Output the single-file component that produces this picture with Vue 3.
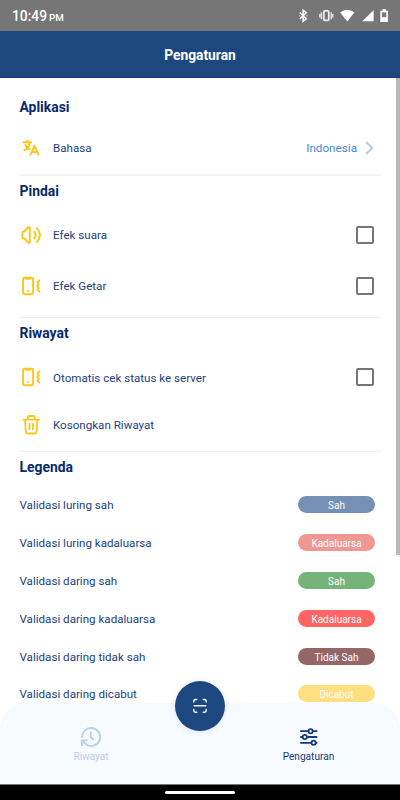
<script setup>
import { ref } from 'vue'

const sound = ref(false)
const vibrate = ref(false)
const autoCheck = ref(false)

const legends = [
  { label: 'Validasi luring sah', badge: 'Sah', tone: 'blue' },
  { label: 'Validasi luring kadaluarsa', badge: 'Kadaluarsa', tone: 'pink' },
  { label: 'Validasi daring sah', badge: 'Sah', tone: 'green' },
  { label: 'Validasi daring kadaluarsa', badge: 'Kadaluarsa', tone: 'red' },
  { label: 'Validasi daring tidak sah', badge: 'Tidak Sah', tone: 'brown' },
  { label: 'Validasi daring dicabut', badge: 'Dicabut', tone: 'yellow' },
]
</script>

<template>
  <div class="screen">
    <div class="status">
      <div class="clock">10:49<span class="pm">PM</span></div>
      <svg class="status-icons" width="92" height="16" viewBox="0 0 92 16">
        <path d="M.8 4.5 7.3 11 4.1 13.2V2.2L7.3 4.6.8 11" fill="none" stroke="#fff" stroke-width="1.5" />
        <path d="M.1 7.8h.1M7.9 7.8h.1" stroke="#fff" stroke-width="1.2" stroke-linecap="round" />
        <rect x="24.8" y="2.9" width="5" height="9.4" rx="1" fill="none" stroke="#eee" stroke-width="1.7" />
        <path d="M22.4 4.2v7M32.2 4.2v7M20.8 6v3.6M33.8 6v3.6" stroke="#ddd" stroke-width="1.5" />
        <path d="M41.2 4.6Q48.3-1 55.4 4.6L48.3 13.5Z" fill="#fff" />
        <path d="M74.7 2.2v11H63.2Z" fill="#fff" />
        <path d="M83.5 1.2h3.5v1.6h1.9v11.2h-7.6V2.8h2.2Z" fill="#fff" />
        <path d="M82.9 4.4h4.4v4.8h-4.4Z" fill="#777" />
      </svg>
    </div>
    <header class="header">Pengaturan</header>

    <main class="content">
      <section class="group app-group">
        <h2>Aplikasi</h2>
        <div class="row">
          <svg class="icon" viewBox="0 0 24 24">
            <g fill="none" stroke="#ffc516" stroke-width="1.9" stroke-linecap="round" stroke-linejoin="round">
              <path d="M4.4 6.2h7.6M8.5 4.4v1.8M6.3 9c1.2 2.5 3 3.9 4.6 4.3M10.6 6.4c-.3 3.8-2.4 6.9-5.4 7.7" />
              <path d="m11.4 18.8 4.1-9 4.1 9M13 16h5.1" />
            </g>
          </svg>
          <span class="label">Bahasa</span>
          <span class="value">Indonesia</span>
          <svg class="chevron" width="9" height="14" viewBox="0 0 9 14">
            <path d="m1 1 6.3 6L1 13" fill="none" stroke="#b5cbe8" stroke-width="1.9" />
          </svg>
        </div>
      </section>

      <section class="group scan-group">
        <h2>Pindai</h2>
        <div class="row">
          <svg class="icon" viewBox="0 0 24 24">
            <g fill="none" stroke="#ffc516" stroke-width="1.9" stroke-linecap="round" stroke-linejoin="round">
              <path d="M5.4 8.5h-.9q-1.2 0-1.2 1.7v3.6q0 1.7 1.2 1.7h.9l3.8 4q1.6 1.3 1.6-.8V5.3q0-2.1-1.6-.8Z" />
              <path d="M15.2 8.5q3 3.5 0 7M17.9 5q6.1 7 0 14" />
            </g>
          </svg>
          <span class="label">Efek suara</span>
          <input v-model="sound" class="check" type="checkbox" aria-label="Efek suara" />
        </div>
        <div class="row">
          <svg class="icon" viewBox="0 0 24 24">
            <g fill="none" stroke="#ffc516" stroke-width="1.9" stroke-linecap="round" stroke-linejoin="round">
              <rect x="4.1" y="3.8" width="10" height="16.4" rx="1.2" />
              <path d="M7.3 4.8h3.6M9.1 17h.1M20.4 6.5l-1.9 1.7 1.2 2.1-1.5 1.7 1.5 1.8-1.2 2.1 1.9 1.7" />
            </g>
          </svg>
          <span class="label">Efek Getar</span>
          <input v-model="vibrate" class="check" type="checkbox" aria-label="Efek Getar" />
        </div>
      </section>

      <section class="group history-group">
        <h2>Riwayat</h2>
        <div class="row">
          <svg class="icon" viewBox="0 0 24 24">
            <g fill="none" stroke="#ffc516" stroke-width="1.9" stroke-linecap="round" stroke-linejoin="round">
              <rect x="4.1" y="3.8" width="10" height="16.4" rx="1.2" />
              <path d="M7.3 4.8h3.6M9.1 17h.1M20.4 6.5l-1.9 1.7 1.2 2.1-1.5 1.7 1.5 1.8-1.2 2.1 1.9 1.7" />
            </g>
          </svg>
          <span class="label">Otomatis cek status ke server</span>
          <input v-model="autoCheck" class="check" type="checkbox" aria-label="Otomatis cek status ke server" />
        </div>
        <div class="row">
          <svg class="icon" viewBox="0 0 24 24">
            <g fill="none" stroke="#ffc516" stroke-width="1.8" stroke-linecap="round" stroke-linejoin="round">
              <path d="M4.4 6.7h15.8M6 6.9l.8 11.6q.2 2 2 2h6.8q1.8 0 2-2l.8-11.6M8.8 6.5V4.2q0-1.2 1.2-1.2h4.4q1.2 0 1.2 1.2v2.3M10.5 11v5.3M14 11v5.3" />
            </g>
          </svg>
          <span class="label raised">Kosongkan Riwayat</span>
        </div>
      </section>

      <section class="legend">
        <h2>Legenda</h2>
        <div v-for="item in legends" :key="item.label" class="legend-row">
          <span class="label">{{ item.label }}</span>
          <span class="badge" :class="item.tone">{{ item.badge }}</span>
        </div>
      </section>
      <div class="scrollbar"></div>
    </main>

    <nav class="tabs">
      <a class="tab muted">
        <svg width="22" height="22" viewBox="0 0 22 22">
          <g fill="none" stroke="currentColor" stroke-width="1.9">
            <path d="M2.2 12A9 9 0 1 1 6.5 18.7" />
            <path d="M1.9 20v-5.6h5.8M2.2 14.7l4.6 4" />
            <path d="M10.8 5.8V11l3 3" />
          </g>
        </svg>
        <span>Riwayat</span>
      </a>
      <a class="tab">
        <svg width="22" height="22" viewBox="0 0 22 22">
          <g fill="none" stroke="currentColor" stroke-width="1.8">
            <path d="M2.2 5.2h7.8M14.8 5.2h4.5M2.2 11h2.6M9.2 11h10.1M2.2 16.8h11M18 16.8h1.3" />
            <circle cx="12.6" cy="5.2" r="2.1" />
            <circle cx="6.8" cy="11" r="2.1" />
            <circle cx="15.6" cy="16.8" r="2.1" />
          </g>
        </svg>
        <span>Pengaturan</span>
      </a>
      <button class="fab" aria-label="Pindai">
        <svg width="16" height="16" viewBox="0 0 16 16">
          <path d="M1.8 4V3q0-1.6 1.6-1.6h1.4M11.2 1.4h1.4q1.6 0 1.6 1.6v1M14.2 11.6v1q0 1.6-1.6 1.6h-1.4M4.8 14.2H3.4q-1.6 0-1.6-1.6v-1M2.3 7.8h11.4" fill="none" stroke="#f2f6fb" stroke-width="1.5" stroke-linecap="round" />
        </svg>
      </button>
    </nav>
    <div class="gesture"><span class="pill"></span></div>
  </div>
</template>

<style>
body {
  margin: 0;
  background: #fff;
}
</style>

<style scoped>
.screen {
  display: flex;
  flex-direction: column;
  width: 400px;
  height: 800px;
  overflow: hidden;
  background: #fff;
  color: #1b4280;
  font-family: Roboto, 'Liberation Sans', sans-serif;
}
.status {
  display: flex;
  flex: none;
  align-items: center;
  justify-content: space-between;
  box-sizing: border-box;
  height: 31px;
  padding: 1px 9px 0 12px;
  background: #767676;
  color: #fff;
}
.clock {
  padding-top: 1px;
  font-size: 13.8px;
  font-weight: 500;
  line-height: 16px;
}
.pm {
  margin-left: 2px;
  font-size: 9.8px;
}
.status-icons {
  flex: none;
}
.header {
  flex: none;
  box-sizing: border-box;
  height: 47px;
  border-bottom: 1px solid #143e77;
  background: #1c477f;
  color: #fff;
  font-size: 13.8px;
  font-weight: 700;
  line-height: 49px;
  text-align: center;
}
.content {
  position: relative;
  flex: 1;
  min-height: 0;
  padding: 17px 19.5px 0 19.5px;
  overflow: hidden;
}
h2 {
  height: 24px;
  margin: 0;
  color: #06296f;
  font-size: 13.9px;
  font-weight: 700;
  line-height: 24px;
}
.group {
  margin-bottom: 3px;
  border-bottom: 1px solid #eeeeef;
}
.row {
  display: flex;
  align-items: center;
  padding-right: 5.5px;
}
.app-group {
  border-bottom: 2px solid #f5f5f6;
}
.app-group .row {
  height: 52px;
  padding-top: 3px;
}
.app-group .label,
.label.raised {
  padding: 0 0 1px;
}
.scan-group {
  padding-bottom: 6px;
}
.scan-group h2 {
  margin-bottom: 6px;
}
.scan-group .row {
  height: 51px;
}
.history-group {
  padding-bottom: 2px;
}
.history-group h2 {
  margin-bottom: 8px;
}
.history-group .row {
  height: 48px;
}
.icon {
  flex: none;
  width: 24px;
  height: 24px;
  margin: 0 10.5px 0 -1px;
}
.label {
  flex: 1;
  padding-top: 1px;
  font-size: 11.6px;
  line-height: 16px;
}
.value {
  color: #4289dc;
  font-size: 11.7px;
}
.chevron {
  margin: 0 1px 0 8px;
}
.check {
  appearance: none;
  box-sizing: border-box;
  width: 18px;
  height: 18px;
  margin: 0 1px 0 0;
  border: 2px solid #777;
  border-radius: 2px;
}
.legend h2 {
  margin-bottom: 7px;
}
.legend-row {
  display: flex;
  align-items: center;
  height: 37.8px;
  padding-right: 5.5px;
}
.badge {
  width: 77px;
  height: 17px;
  border-radius: 9px;
  color: #fff;
  font-size: 10px;
  line-height: 19px;
  text-align: center;
}
.blue { background: #7490b5; }
.pink { background: #ef9793; }
.green { background: #75b37b; }
.red { background: #ff6565; }
.brown { background: #946666; }
.yellow { background: #ffdf7f; }
.scrollbar {
  position: absolute;
  top: 0;
  right: 0;
  width: 4px;
  height: 477px;
  background: #b9b9b9;
}
.tabs {
  position: relative;
  display: flex;
  flex: none;
  justify-content: space-between;
  box-sizing: border-box;
  height: 81px;
  padding: 23px 41.5px 0 41px;
  border-radius: 27px 27px 0 0;
  background: #f7faff;
}
.tab {
  display: flex;
  flex-direction: column;
  align-items: center;
  width: 100px;
  color: #123b78;
  font-size: 10.1px;
  line-height: 14px;
  gap: 2px;
}
.muted {
  color: #b9cfea;
}
.fab {
  position: absolute;
  top: -22px;
  left: 175px;
  display: grid;
  place-items: center;
  width: 50px;
  height: 50px;
  padding: 0;
  border: 0;
  border-radius: 50%;
  background: #1c477f;
  box-shadow: 0 1px 5px rgba(30, 60, 110, 0.13);
}
.gesture {
  display: flex;
  flex: none;
  justify-content: center;
  box-sizing: border-box;
  height: 16px;
  padding-top: 6px;
  border-top: 1px solid #777;
  background: #000;
}
.pill {
  width: 70px;
  height: 3px;
  border-radius: 1.5px;
  background: #fff;
}
</style>
